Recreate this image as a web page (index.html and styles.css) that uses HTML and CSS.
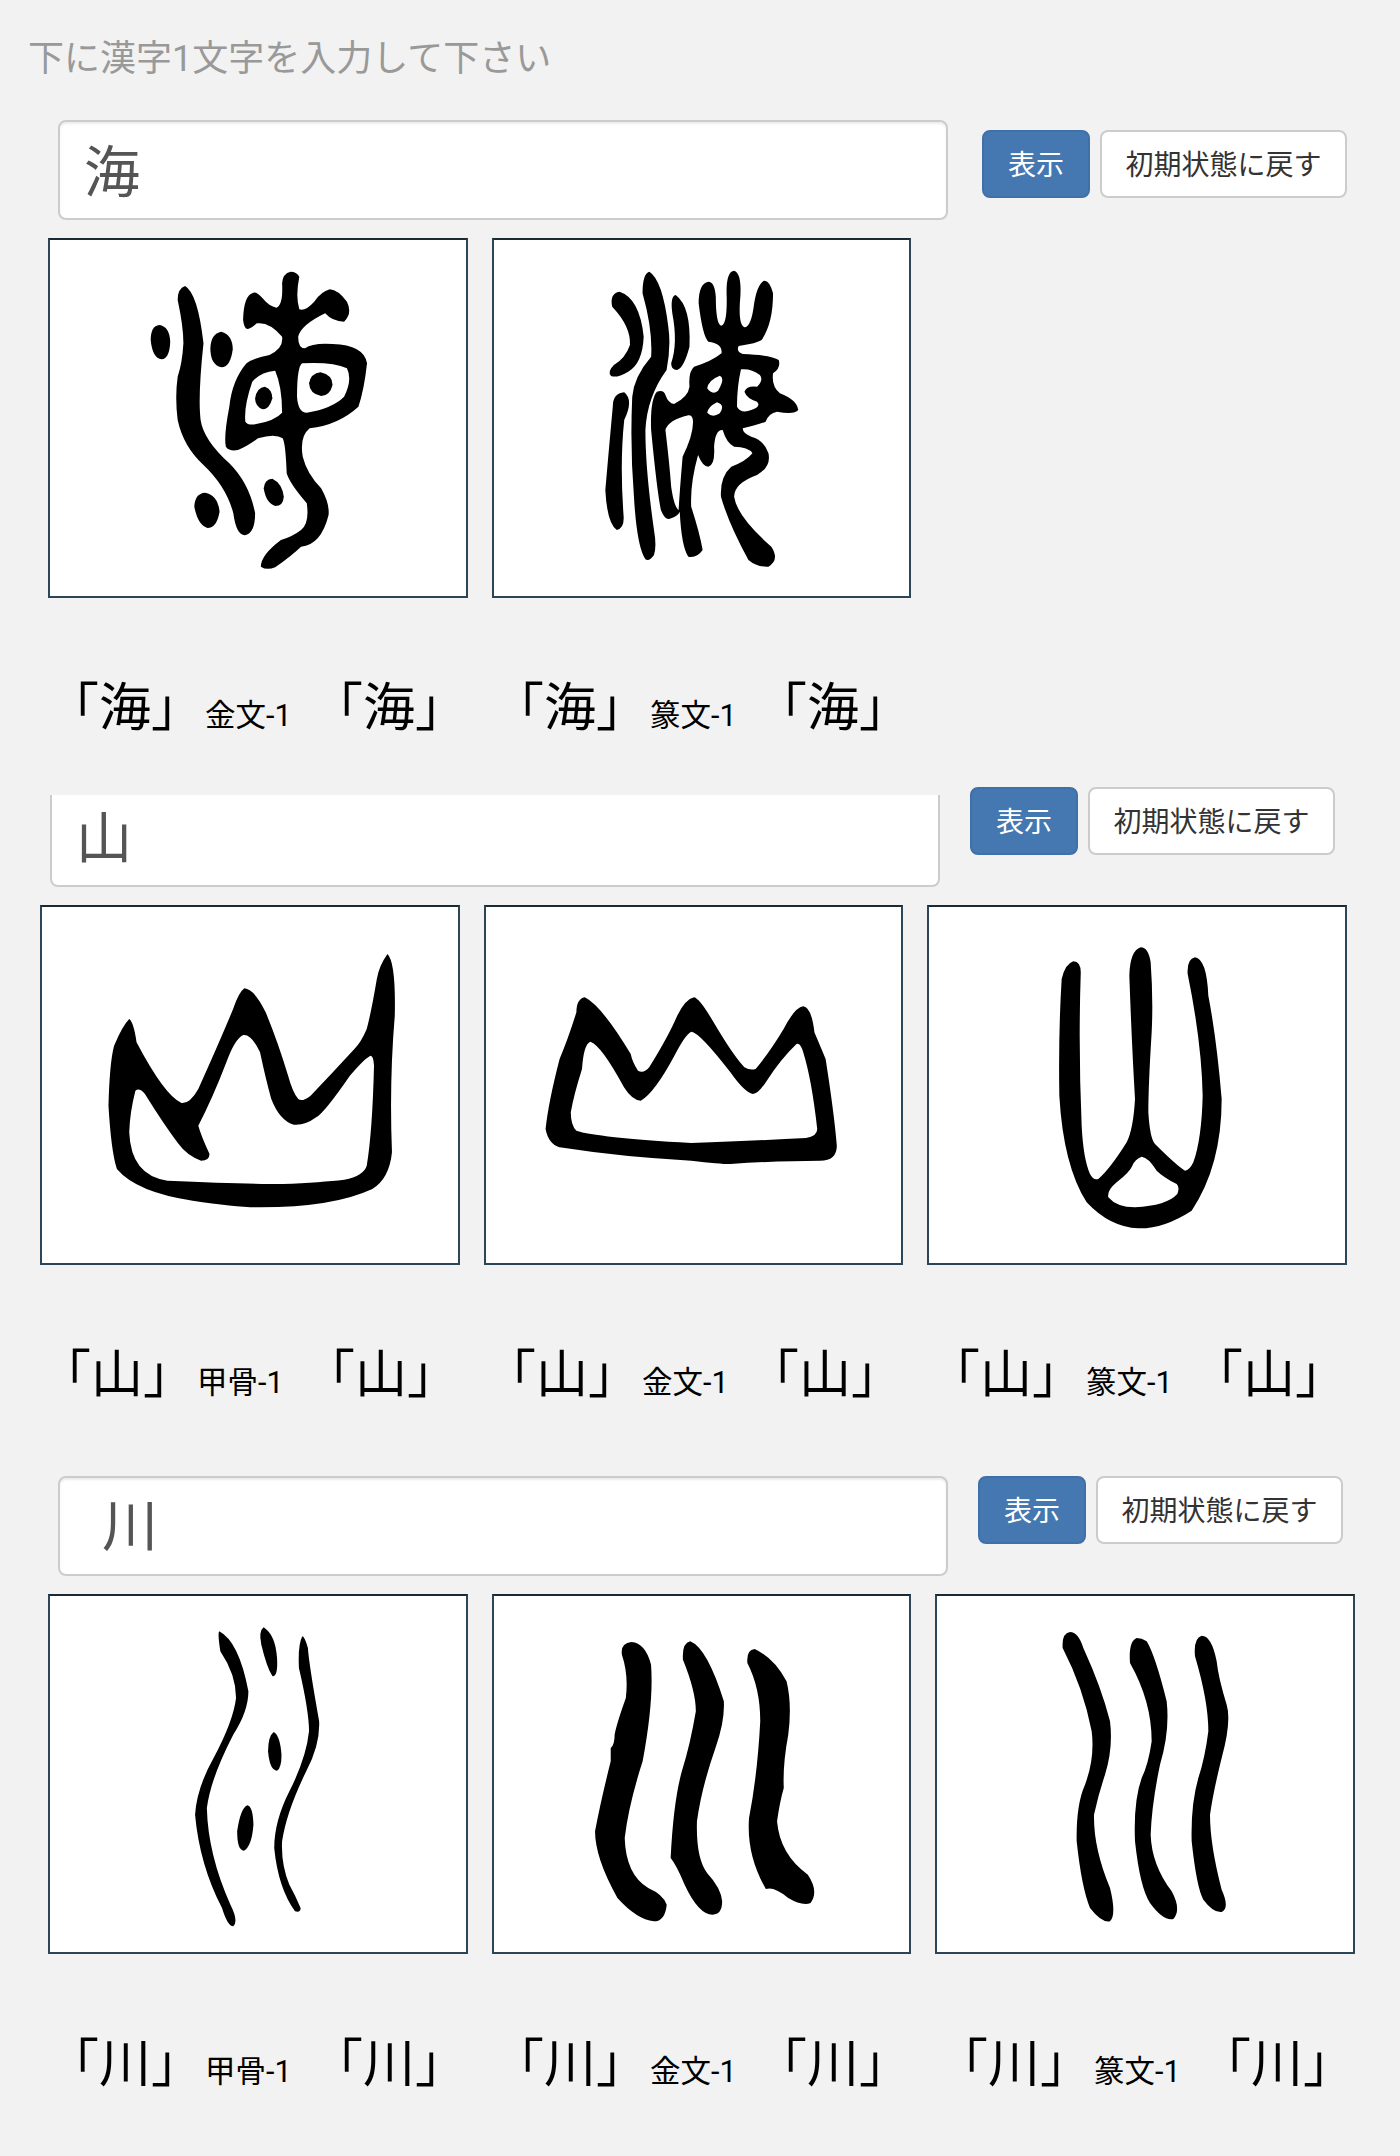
FILE: index.html
```html
<!DOCTYPE html>
<html lang="ja">
<head>
  <meta charset="UTF-8">
  <title>漢字 古代文字</title>
  <link rel="stylesheet" href="styles.css">
</head>
<body>
  <h1 class="page-title">下に漢字1文字を入力して下さい</h1>

  <!-- 海 -->
  <section class="entry">
    <div class="search-row">
      <input class="kanji-input" type="text" value="海">
      <div class="actions actions-low">
        <button class="btn btn-primary">表示</button>
        <button class="btn btn-default">初期状態に戻す</button>
      </div>
    </div>
    <div class="cards">
      <div class="card">
        <svg viewBox="17.5 30 725 1068" preserveAspectRatio="none">
          <path d="M208 285Q226 290 227 335Q226 385 212 388Q196 385 193 330Q193 288 208 285Z"/>
          <path d="M316 305Q336 315 336 358Q332 412 316 412Q297 405 297 355Q298 310 316 305Z"/>
          <path d="M405 746Q422 760 425 800Q424 828 410 828Q394 820 390 775Q391 748 405 746Z"/>
          <path d="M288 788Q310 795 313 845Q308 894 292 894Q275 885 269 830Q270 790 288 788Z"/>
          <path d="M253 168Q240 175 240 210Q250 290 250 340Q248 400 240 440Q235 500 240 570Q250 650 285 705Q325 770 337 850Q342 915 357 916Q375 910 375 850Q365 760 330 700Q285 630 280 570Q275 500 285 340Q275 190 253 168Z"/>
          <path fill-rule="evenodd" d="M437 125Q423 130 422 160Q424 225 412 233Q400 230 388 205Q378 185 372 188Q355 195 354 270Q356 297 362 297Q368 295 378 280Q400 275 422 320Q425 355 400 375Q370 385 360 400Q335 450 330 530Q320 620 324 650Q330 665 345 660Q360 650 380 625Q410 610 423 625Q428 640 430 730Q435 760 465 820Q470 880 455 900Q440 920 420 930Q385 975 385 1010Q395 1022 410 1012Q440 975 455 950Q490 945 503 855Q505 820 490 775Q465 730 458 680Q452 620 470 595Q520 585 555 530Q565 480 570 400Q565 345 510 342Q475 338 462 355Q450 355 450 320Q455 285 497 250Q510 275 530 275Q545 250 535 215Q520 180 505 178Q490 185 478 215Q462 245 452 238Q445 200 452 140Q447 125 437 125ZM410 422Q385 425 370 455Q355 530 358 575Q362 586 375 583Q410 572 422 548Q422 470 410 422ZM457 400Q448 410 448 500Q450 548 465 548Q510 535 530 500Q545 450 535 415Q510 395 457 400Z"/>
          <path d="M392 470Q405 478 405 505Q400 538 388 538Q375 530 375 505Q378 472 392 470Z"/>
          <path d="M489 427Q510 435 510 465Q505 498 490 498Q470 492 469 460Q472 430 489 427Z"/>
        </svg>
      </div>
      <div class="card">
        <svg viewBox="790.5 30 725 1068" preserveAspectRatio="none">
          <path d="M1010 185Q992 190 997 230Q1030 290 1028 345Q1020 385 1000 405Q988 425 995 438Q1005 445 1025 425Q1050 400 1052 320Q1045 205 1010 185Z"/>
          <path d="M1062 125Q1050 130 1050 190Q1068 300 1065 380Q1035 440 1032 500Q1028 650 1035 800Q1040 950 1055 988Q1062 995 1070 975Q1075 950 1070 900Q1055 720 1055 600Q1058 500 1092 420Q1100 350 1095 290Q1085 150 1062 125Z"/>
          <path d="M1108 195Q1098 198 1102 250Q1112 340 1100 400Q1100 420 1110 420Q1122 415 1132 350Q1135 230 1108 195Z"/>
          <path d="M1018 487Q998 490 998 530Q990 680 985 780Q988 880 1005 900Q1018 895 1017 860Q1010 700 1018 570Q1035 510 1018 487Z"/>
          <path fill-rule="evenodd" d="M1210 122Q1195 125 1197 200Q1198 285 1187 287Q1178 280 1178 200Q1176 155 1165 155Q1148 160 1148 220Q1155 320 1165 335Q1190 340 1188 370Q1170 395 1140 410Q1130 425 1132 470Q1130 500 1105 522Q1095 520 1090 495Q1087 478 1075 485Q1063 510 1065 600Q1075 780 1082 840Q1090 875 1100 865Q1112 857 1115 845Q1118 950 1130 980Q1145 985 1155 960Q1150 910 1135 830Q1133 760 1147 675Q1155 710 1165 710Q1177 705 1175 650Q1177 598 1190 600Q1197 640 1210 650Q1235 650 1242 670Q1230 695 1205 710Q1185 740 1187 800Q1200 880 1235 990Q1250 1012 1270 1010Q1290 990 1275 950Q1215 860 1210 800Q1210 760 1250 735Q1275 710 1270 670Q1262 630 1240 620Q1225 610 1225 595Q1250 585 1265 575Q1270 550 1285 545Q1315 555 1322 540Q1320 510 1290 490Q1275 470 1278 430Q1292 415 1288 390Q1275 375 1225 372Q1213 365 1218 348Q1250 340 1258 330Q1278 280 1278 190Q1272 150 1262 152Q1250 165 1245 220Q1240 292 1228 292Q1218 285 1220 220Q1225 130 1210 122ZM1185 437Q1165 450 1163 475Q1172 497 1182 482Q1195 445 1185 437ZM1180 517Q1165 530 1163 548Q1172 565 1185 550Q1195 525 1180 517ZM1222 418Q1215 470 1215 530Q1222 552 1240 540Q1258 530 1250 515Q1232 505 1228 485Q1232 466 1250 470Q1262 450 1255 435Q1240 415 1222 418ZM1130 556Q1095 570 1090 600Q1097 700 1100 770Q1105 830 1113 840Q1115 780 1120 680Q1140 610 1138 570Q1137 555 1130 556Z"/>
        </svg>
      </div>
    </div>
    <div class="captions">
      <div class="caption">
        <span class="kanji">「海」</span><span class="script">金文-1</span><span class="kanji">「海」</span>
      </div>
      <div class="caption">
        <span class="kanji">「海」</span><span class="script">篆文-1</span><span class="kanji">「海」</span>
      </div>
    </div>
  </section>

  <!-- 山 -->
  <section class="entry entry-shifted">
    <div class="search-row">
      <input class="kanji-input kanji-input-cut" type="text" value="山">
      <div class="actions">
        <button class="btn btn-primary">表示</button>
        <button class="btn btn-default">初期状態に戻す</button>
      </div>
    </div>
    <div class="cards">
      <div class="card">
        <svg viewBox="21.6 24 741 1068" preserveAspectRatio="none">
          <path fill-rule="evenodd" d="M637 165Q622 200 618 240Q608 340 600 390Q590 430 578 450Q540 520 500 590Q485 610 478 600Q468 580 460 530Q440 420 420 340Q400 270 382 268Q372 280 362 330Q340 420 300 570Q285 615 270 612Q240 590 190 430Q185 370 177 360Q165 380 150 440Q142 490 140 620Q145 760 155 810Q190 880 290 905Q370 925 410 925Q540 925 610 870Q640 840 645 760Q640 550 650 350Q652 190 637 165ZM607 470Q598 475 570 530Q525 640 510 655Q490 680 470 677Q445 665 430 600Q420 540 410 460Q395 405 380 408Q365 420 350 490Q325 600 300 680Q305 710 320 765Q320 785 305 785Q280 770 265 735Q240 680 205 585Q195 565 188 575Q178 640 177 700Q180 830 245 845Q380 855 450 855Q520 850 560 842Q595 830 600 800Q610 700 613 500Q612 470 607 470Z"/>
        </svg>
      </div>
      <div class="card">
        <svg viewBox="813.6 24 741 1068" preserveAspectRatio="none">
          <path fill-rule="evenodd" d="M990 295Q975 300 975 340Q960 420 945 480Q925 610 920 690Q925 735 945 745Q1060 775 1180 785Q1230 795 1250 795Q1340 785 1410 785Q1440 785 1440 740Q1435 640 1420 480Q1405 420 1400 400Q1395 325 1380 322Q1365 325 1345 390Q1320 460 1295 510Q1285 515 1275 505Q1255 470 1220 370Q1195 298 1185 295Q1170 300 1155 350Q1140 410 1105 505Q1095 525 1085 515Q1075 490 1072 465Q1020 320 990 295ZM1000 428Q988 435 985 510Q970 590 965 640Q965 680 975 695Q1010 715 1180 732Q1300 725 1385 717Q1405 712 1405 690Q1395 540 1380 460Q1375 430 1368 435Q1340 480 1315 545Q1300 585 1290 585Q1275 580 1250 520Q1195 400 1180 398Q1170 405 1150 470Q1115 580 1090 605Q1075 605 1060 565Q1020 440 1000 428Z"/>
        </svg>
      </div>
      <div class="card">
        <svg viewBox="87 24 1248 1068" preserveAspectRatio="none">
          <path fill-rule="evenodd" d="M520 187Q495 195 485 240Q475 400 478 590Q490 800 560 910Q630 985 715 988Q790 990 875 935Q965 800 965 600Q950 420 925 290Q920 180 885 175Q860 180 863 225Q905 430 908 590Q905 720 880 790Q868 815 855 815Q830 800 765 735Q750 720 745 640Q745 560 755 400Q760 300 752 190Q745 145 722 145Q690 155 688 230Q695 430 705 600Q700 690 680 730Q630 810 595 840Q580 845 570 825Q550 780 545 680Q535 450 542 230Q545 187 520 187ZM725 773Q705 780 697 800Q690 818 650 850Q620 875 625 895Q650 925 705 925Q800 920 832 885Q840 865 830 855Q790 835 770 815Q745 775 725 773Z"/>
        </svg>
      </div>
    </div>
    <div class="captions">
      <div class="caption">
        <span class="kanji">「山」</span><span class="script">甲骨-1</span><span class="kanji">「山」</span>
      </div>
      <div class="caption">
        <span class="kanji">「山」</span><span class="script">金文-1</span><span class="kanji">「山」</span>
      </div>
      <div class="caption">
        <span class="kanji">「山」</span><span class="script">篆文-1</span><span class="kanji">「山」</span>
      </div>
    </div>
  </section>

  <!-- 川 -->
  <section class="entry entry-last">
    <div class="search-row">
      <input class="kanji-input kanji-input-indent" type="text" value=" 川">
      <div class="actions">
        <button class="btn btn-primary">表示</button>
        <button class="btn btn-default">初期状態に戻す</button>
      </div>
    </div>
    <div class="cards">
      <div class="card">
        <svg viewBox="18.6 24 741 1068" preserveAspectRatio="none">
          <path d="M320 130Q317 135 322 190Q350 260 350 330Q345 400 310 510Q280 600 277 680Q285 830 325 960Q335 1015 345 1015Q355 1000 340 950Q300 800 298 660Q305 570 345 440Q372 370 372 310Q355 160 320 130Z"/>
          <path d="M399 118Q390 130 395 170Q405 240 415 265Q425 265 423 210Q420 140 399 118Z"/>
          <path d="M468 145Q460 170 462 240Q480 370 480 430Q475 510 445 610Q418 700 418 780Q425 900 455 970Q465 975 465 960Q455 920 445 890Q430 830 432 760Q440 670 475 550Q500 470 498 400Q480 230 478 180Q472 145 468 145Z"/>
          <path d="M417 432Q407 445 407 490Q410 548 423 548Q431 540 431 500Q428 440 417 432Z"/>
          <path d="M370 652Q358 660 352 730Q352 788 364 788Q378 775 381 710Q380 655 370 652Z"/>
        </svg>
      </div>
      <div class="card">
        <svg viewBox="809.6 24 741 1068" preserveAspectRatio="none">
          <path d="M1055 162Q1035 165 1038 200Q1050 260 1045 330Q1028 410 1025 440Q1025 470 1018 480L1018 520Q1000 640 990 730Q990 810 1030 930Q1065 995 1095 1000Q1115 1000 1118 950Q1112 920 1085 900Q1045 860 1043 750Q1050 650 1075 520Q1095 340 1090 230Q1080 165 1055 162Z"/>
          <path d="M1160 160Q1145 165 1147 215Q1170 310 1170 370Q1160 470 1145 550Q1130 640 1125 810Q1135 830 1150 890Q1175 980 1200 980Q1217 980 1217 940Q1215 900 1190 855Q1170 810 1172 700Q1180 600 1205 480Q1222 400 1220 340Q1190 180 1160 160Z"/>
          <path d="M1275 183Q1260 185 1262 225Q1285 300 1285 400Q1280 560 1265 690Q1260 800 1295 903Q1310 895 1335 930Q1360 955 1375 945Q1390 910 1370 860Q1320 800 1315 700Q1320 640 1327 600Q1325 530 1335 440Q1342 350 1332 280Q1310 210 1275 183Z"/>
        </svg>
      </div>
      <div class="card">
        <svg viewBox="51 24 1248 1068" preserveAspectRatio="none">
          <path d="M450 132Q425 135 428 180Q490 300 515 430Q525 510 495 590Q468 650 470 760Q485 900 510 960Q545 1005 570 1000Q590 980 570 900Q520 780 522 680Q535 620 555 560Q580 480 570 400Q545 300 490 180Q475 132 450 132Z"/>
          <path d="M650 150Q625 160 630 225Q695 340 695 460Q685 530 665 570Q640 640 645 760Q660 900 690 945Q730 1000 760 993Q785 965 755 910Q695 830 692 740Q695 650 720 530Q750 430 740 340Q705 200 680 160Q665 150 650 150Z"/>
          <path d="M845 143Q820 150 825 205Q865 340 865 430Q855 510 835 570Q812 650 815 760Q830 900 850 935Q880 975 905 972Q930 960 905 905Q870 770 870 680Q880 610 905 510Q935 400 920 350Q895 270 890 220Q875 143 845 143Z"/>
        </svg>
      </div>
    </div>
    <div class="captions">
      <div class="caption">
        <span class="kanji">「川」</span><span class="script">甲骨-1</span><span class="kanji">「川」</span>
      </div>
      <div class="caption">
        <span class="kanji">「川」</span><span class="script">金文-1</span><span class="kanji">「川」</span>
      </div>
      <div class="caption">
        <span class="kanji">「川」</span><span class="script">篆文-1</span><span class="kanji">「川」</span>
      </div>
    </div>
  </section>
</body>
</html>
```

FILE: styles.css
```css
* { box-sizing: border-box; }

body {
  margin: 0;
  background-color: #f2f2f2;
  color: #000;
  font-family: Roboto, "Noto Sans CJK JP", sans-serif;
}

.page-title {
  margin: 0;
  padding: 32px 0 0 28px;
  font-size: 36px;
  line-height: 54px;
  font-weight: normal;
  color: #999;
  height: 120px;
}

.entry { padding-left: 48px; }
.entry-shifted { padding-left: 40px; margin-top: 41px; }
.entry-last { margin-top: 63px; }

.search-row {
  display: flex;
  align-items: flex-start;
}

.kanji-input {
  width: 890px;
  height: 100px;
  margin-left: 10px;
  padding: 0 24px 6px;
  background: #fff;
  border: 2px solid #ccc;
  border-radius: 8px;
  box-shadow: inset 0 2px 2px rgba(0, 0, 0, 0.075);
  font-family: inherit;
  font-size: 56px;
  color: #555;
}
.kanji-input-cut {
  height: 92px;
  margin-top: 8px;
  padding-bottom: 14px;
  border-top: 0;
  border-radius: 0 0 8px 8px;
  box-shadow: none;
}
.kanji-input-indent {
  padding-left: 28px;
  padding-bottom: 9px;
}

.actions {
  display: flex;
  gap: 10px;
  margin-left: 30px;
}
.actions-low { margin-left: 34px; margin-top: 10px; }

.btn {
  height: 68px;
  padding: 0 0 2px;
  border: 2px solid transparent;
  border-radius: 8px;
  font-family: inherit;
  font-size: 28px;
  white-space: nowrap;
}
.btn-primary {
  width: 108px;
  background-color: #4577b0;
  border-color: #4070a8;
  color: #fff;
}
.btn-default {
  width: 247px;
  background-color: #fff;
  border-color: #ccc;
  color: #333;
}

.cards {
  display: flex;
  gap: 24px;
  margin-top: 18px;
}
.card {
  width: 420px;
  height: 360px;
  background-color: #fff;
  border: 2px solid #2c4658;
  border-top-color: #1c2b33;
}
.card:nth-child(2) { width: 419px; }
.card svg {
  display: block;
  width: 100%;
  height: 100%;
}

.captions {
  display: flex;
  gap: 24px;
  margin-top: 81px;
}
.caption {
  width: 420px;
  display: flex;
  align-items: baseline;
  margin-left: -1px;
}
.caption + .caption { margin-left: 0; padding-left: 1px; }
.kanji {
  font-size: 52px;
  line-height: 60px;
}
.script {
  width: 118px;
  padding-left: 2px;
  font-size: 30.5px;
  line-height: 60px;
}
```
